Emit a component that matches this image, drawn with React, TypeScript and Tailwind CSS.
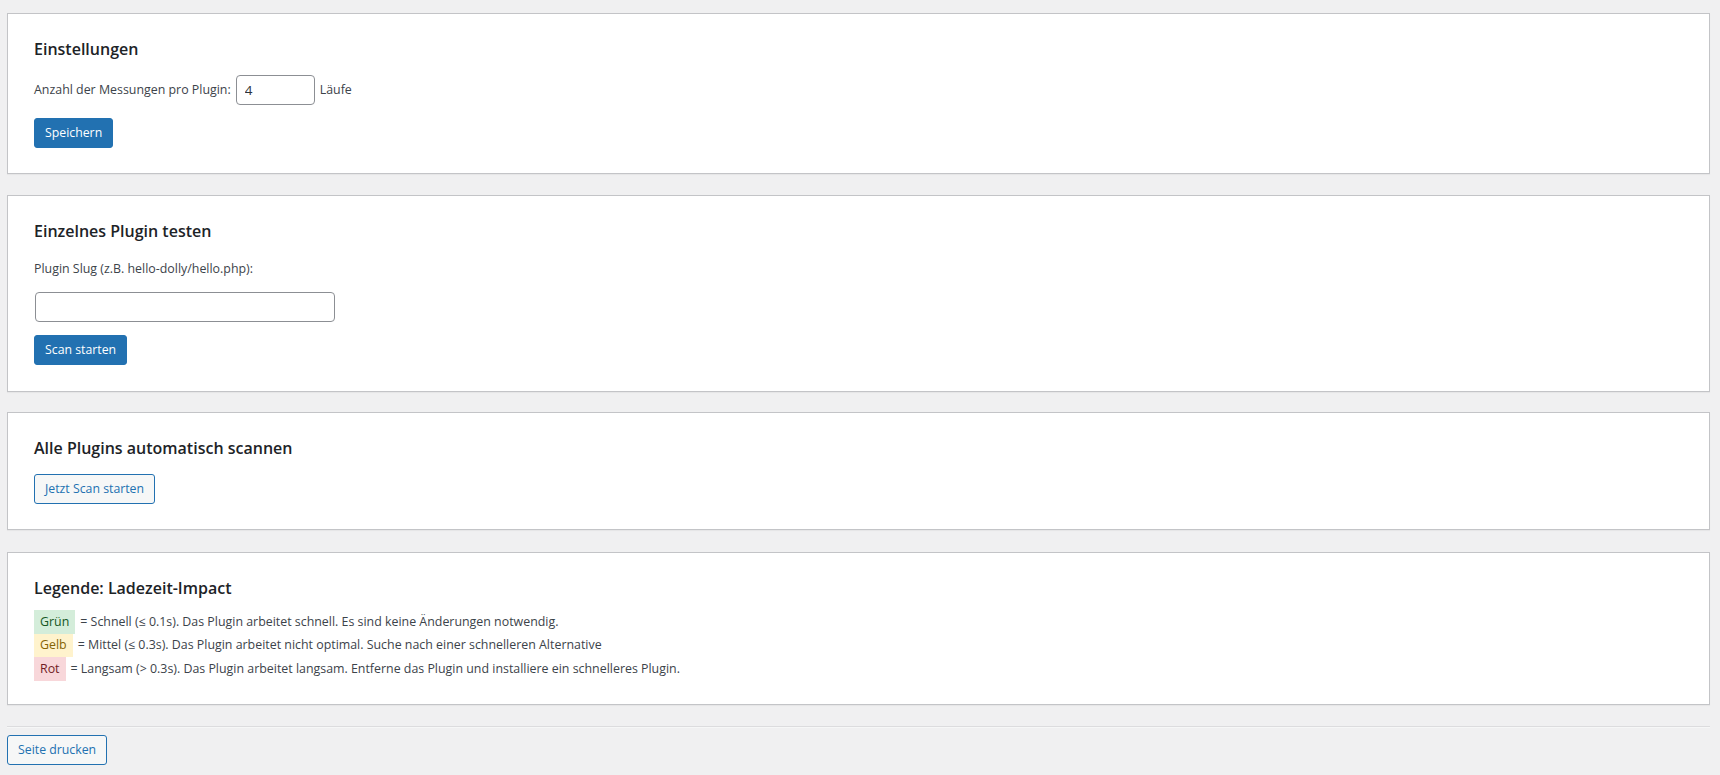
import React from "react";

const font = { fontFamily: '"Segoe UI", "Open Sans", "Noto Sans", sans-serif' };

function Card({ className = "", children }: { className?: string; children: React.ReactNode }) {
  return (
    <div
      className={`bg-white border border-[#c3c4c7] shadow-[0_1px_1px_rgba(0,0,0,0.04)] px-[26px] pt-[23px] ${className}`}
    >
      {children}
    </div>
  );
}

function Heading({ children }: { children: React.ReactNode }) {
  return (
    <h2 className="text-[16px] leading-[24px] font-semibold text-[#1d2327]">{children}</h2>
  );
}

function PrimaryButton({ children }: { children: React.ReactNode }) {
  return (
    <button className="h-[30px] px-[10px] rounded-[3px] border border-[#2271b1] bg-[#2271b1] text-white text-[12.3px] leading-[28px]">
      {children}
    </button>
  );
}

function SecondaryButton({ children }: { children: React.ReactNode }) {
  return (
    <button className="h-[30px] px-[10px] rounded-[3px] border border-[#2271b1] bg-[#f6f7f7] text-[#2271b1] text-[12.3px] leading-[28px]">
      {children}
    </button>
  );
}

const legend = [
  {
    label: "Grün",
    cls: "bg-[#d4edda] text-[#155724]",
    text: "= Schnell (≤ 0.1s). Das Plugin arbeitet schnell. Es sind keine Änderungen notwendig.",
  },
  {
    label: "Gelb",
    cls: "bg-[#fff3cd] text-[#856404]",
    text: "= Mittel (≤ 0.3s). Das Plugin arbeitet nicht optimal. Suche nach einer schnelleren Alternative",
  },
  {
    label: "Rot",
    cls: "bg-[#f8d7da] text-[#721c24]",
    text: "= Langsam (> 0.3s). Das Plugin arbeitet langsam. Entferne das Plugin und installiere ein schnelleres Plugin.",
  },
];

export default function App() {
  return (
    <div className="min-h-screen bg-[#f0f0f1] text-[#3c434a] text-[12.4px]" style={font}>
      <div className="pl-[7px] pr-[10px] pt-[13px] pb-[10px]">
        {/* Einstellungen */}
        <Card className="pb-[25px]">
          <Heading>Einstellungen</Heading>
          <div className="mt-[14px] flex items-center h-[30px]">
            <span>Anzahl der Messungen pro Plugin:</span>
            <input
              defaultValue="4"
              className="ml-[5px] w-[79px] h-[30px] px-[8px] rounded-[4px] border border-[#8c8f94] bg-white text-[13.4px] text-[#2c3338] outline-none"
            />
            <span className="ml-[5px]">Läufe</span>
          </div>
          <div className="mt-[13px]">
            <PrimaryButton>Speichern</PrimaryButton>
          </div>
        </Card>

        {/* Einzelnes Plugin */}
        <Card className="mt-[21px] pb-[26px]">
          <Heading>Einzelnes Plugin testen</Heading>
          <p className="mt-[16px] leading-[20px]">Plugin Slug (z.B. hello-dolly/hello.php):</p>
          <input className="mt-[13px] ml-px block w-[300px] h-[30px] px-[8px] rounded-[4px] border border-[#8c8f94] bg-white text-[13.4px] outline-none" />
          <div className="mt-[13px]">
            <PrimaryButton>Scan starten</PrimaryButton>
          </div>
        </Card>

        {/* Alle Plugins */}
        <Card className="mt-[20px] pb-[25px]">
          <Heading>Alle Plugins automatisch scannen</Heading>
          <div className="mt-[14px]">
            <SecondaryButton>Jetzt Scan starten</SecondaryButton>
          </div>
        </Card>

        {/* Legende */}
        <Card className="mt-[22px] pb-[23px]">
          <Heading>Legende: Ladezeit-Impact</Heading>
          <div className="mt-[10px]">
            {legend.map((l) => (
              <div key={l.label} className="flex items-center h-[23.67px]">
                <span className={`h-full flex items-center px-[6px] ${l.cls}`}>{l.label}</span>
                <span className="ml-[5px]">{l.text}</span>
              </div>
            ))}
          </div>
        </Card>

        <hr className="mt-[21px] border-0 border-t border-t-[#dcdcde] border-b border-b-[#f6f7f7]" />
        <div className="mt-[7px]">
          <SecondaryButton>Seite drucken</SecondaryButton>
        </div>
      </div>
    </div>
  );
}
